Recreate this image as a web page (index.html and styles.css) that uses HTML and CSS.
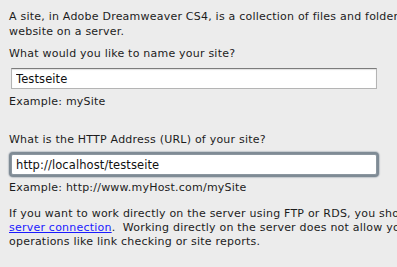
FILE: index.html
```html
<!DOCTYPE html>
<html>
<head>
    <link rel="stylesheet" href="styles.css">
    <title>Site Setup</title>
</head>
<body>
    <div class="pane">
        <p class="intro">A site, in Adobe Dreamweaver CS4, is a collection of files and folders that corresponds to a<br>website on a server.</p>

        <label class="question" for="sitename">What would you like to name your site?</label>
        <input id="sitename" class="field" type="text" value="Testseite">
        <div class="example">Example: mySite</div>

        <label class="question second" for="siteurl">What is the HTTP Address (URL) of your site?</label>
        <input id="siteurl" class="field focused" type="text" value="http://localhost/testseite">
        <div class="example">Example: http://www.myHost.com/mySite</div>

        <p class="note">If you want to work directly on the server using FTP or RDS, you should create an FTP or RDS<br>
        <a href="#">server connection</a>.&nbsp; Working directly on the server does not allow you to perform sitewide<br>
        operations like link checking or site reports.</p>
    </div>
</body>
</html>
```

FILE: styles.css
```css
html, body
{
    margin: 0;
    padding: 0;
    background-color: #ececec;
    overflow: hidden;
}
.pane
{
    padding: 9px 0 0 9px;
    font-family: "DejaVu Sans", sans-serif;
    font-size: 11px;
    letter-spacing: 0.22px;
    line-height: 15px;
    color: #1c1c1c;
    white-space: nowrap;
}
.intro
{
    margin: 0;
}
.question
{
    display: block;
    margin-top: 7px;
}
.question.second
{
    margin-top: 23px;
}
.field
{
    display: block;
    box-sizing: border-box;
    width: 366px;
    height: 21px;
    margin: 7px 0 0 2px;
    padding: 0 4px;
    border: 1px solid #b4b4b4;
    border-top-color: #7c7c7c;
    box-shadow: inset 0 1px 1px rgba(0,0,0,0.12);
    background: #fff;
    font-family: "DejaVu Sans", sans-serif;
    font-size: 11.5px;
    letter-spacing: 0.1px;
    color: #111;
    outline: none;
}
.field.focused
{
    border-color: #8b969f;
    box-shadow: 0 0 0 2px #7f8b95, 0 0 1px 3px rgba(120,135,150,0.35);
    border-radius: 2px;
}
.example
{
    margin-top: 5px;
}
.note
{
    margin: 12px 0 0 0;
    line-height: 14px;
}
.note a
{
    color: #1a1aff;
    text-decoration: underline;
}
```
